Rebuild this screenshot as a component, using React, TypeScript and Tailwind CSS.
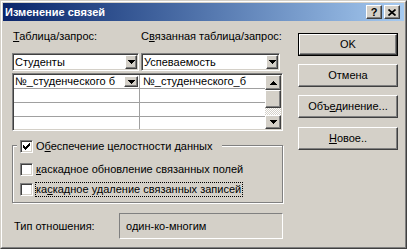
import React from 'react';

// Рамки в стиле классической Windows
const raised =
  'border border-t-white border-l-white border-r-[#404040] border-b-[#404040] shadow-[inset_-1px_-1px_0_#808080] bg-[#d4d0c8]';
const sunken =
  'border border-t-[#808080] border-l-[#808080] border-r-white border-b-white shadow-[inset_1px_1px_0_#404040,inset_-1px_-1px_0_#d4d0c8] p-px';

// Маленькие стрелки, рисуются по пикселям
const ArrowDown = () => (
  <svg width="7" height="4" viewBox="0 0 7 4" shapeRendering="crispEdges">
    <rect x="0" y="0" width="7" height="1" fill="#000" />
    <rect x="1" y="1" width="5" height="1" fill="#000" />
    <rect x="2" y="2" width="3" height="1" fill="#000" />
    <rect x="3" y="3" width="1" height="1" fill="#000" />
  </svg>
);

const ArrowUp = () => (
  <svg width="7" height="4" viewBox="0 0 7 4" shapeRendering="crispEdges">
    <rect x="3" y="0" width="1" height="1" fill="#000" />
    <rect x="2" y="1" width="3" height="1" fill="#000" />
    <rect x="1" y="2" width="5" height="1" fill="#000" />
    <rect x="0" y="3" width="7" height="1" fill="#000" />
  </svg>
);

// Флажок 13x13
const CheckBox = ({ checked }: { checked?: boolean }) => (
  <div className={`w-[13px] h-[13px] shrink-0 bg-white flex items-center justify-center ${sunken}`}>
    {checked && (
      <svg width="7" height="7" viewBox="0 0 7 7" shapeRendering="crispEdges">
        {[2, 3, 4, 3, 2, 1, 0].map((y, x) => (
          <rect key={x} x={x} y={y} width="1" height="3" fill="#000" />
        ))}
      </svg>
    )}
  </div>
);

// Кнопка справа
const Button = ({ children, className = '' }: { children: React.ReactNode; className?: string }) => (
  <div className={`h-[23px] flex items-center justify-center ${raised} ${className}`}>{children}</div>
);

// Выпадающий список
const Combo = ({ text, width }: { text: string; width: string }) => (
  <div className={`h-[18px] bg-white flex ${sunken} ${width}`}>
    <div className="flex-1 pl-px flex items-center overflow-hidden whitespace-nowrap">{text}</div>
    <div className={`w-[12px] flex items-center justify-center ${raised}`}>
      <ArrowDown />
    </div>
  </div>
);

const U = ({ children }: { children: React.ReactNode }) => <span className="underline underline-offset-1">{children}</span>;

export default function App() {
  return (
    <div className="w-[407px] h-[249px] bg-[#d4d0c8] border border-t-[#d4d0c8] border-l-[#d4d0c8] border-r-[#404040] border-b-[#404040] font-['Liberation_Sans',Arial,sans-serif] text-[11px] leading-[13px] text-black">
      <div className="h-full flex flex-col border border-t-white border-l-white border-r-[#808080] border-b-[#808080] p-px">
        {/* Заголовок окна */}
        <div className="h-[18px] shrink-0 flex items-center bg-linear-to-r from-[#0a246a] to-[#a6caf0] pl-[2px] pr-[4px]">
          <span className="flex-1 text-white font-bold">Изменение связей</span>
          <div className={`w-[16px] h-[14px] flex items-center justify-center font-bold text-[11px] leading-none ${raised}`}>?</div>
          <div className={`ml-[2px] w-[16px] h-[14px] flex items-center justify-center ${raised}`}>
            <svg width="8" height="7" viewBox="0 0 8 7">
              <path d="M0.5 0.5L7.5 6.5M7.5 0.5L0.5 6.5" stroke="#000" strokeWidth="1.7" />
            </svg>
          </div>
        </div>

        <div className="flex flex-1 items-start pl-[9px] pt-[9px]">
          {/* Левая часть */}
          <div className="w-[271px] flex flex-col">
            <div className="flex h-[13px]">
              <div className="w-[129px] pl-px">
                <U>Т</U>аблица/запрос:
              </div>
              <div>
                С<U>в</U>язанная таблица/запрос:
              </div>
            </div>

            <div className="mt-[10px] flex gap-[2px]">
              <Combo text="Студенты" width="w-[127px]" />
              <Combo text="Успеваемость" width="w-[139px]" />
            </div>

            {/* Таблица полей */}
            <div className={`mt-[2px] h-[58px] bg-white flex ${sunken}`}>
              <div className="flex-1 flex flex-col">
                <div className="h-[14px] flex border-b border-[#a0a0a0]">
                  <div className="w-[126px] border-r border-[#a0a0a0] flex items-center">
                    <div className="flex-1 pl-px overflow-hidden whitespace-nowrap">№_студенческого б</div>
                    <div className={`w-[14px] h-[11px] mr-[1px] flex items-center justify-center ${raised}`}>
                      <ArrowDown />
                    </div>
                  </div>
                  <div className="flex-1 pl-[3px] overflow-hidden whitespace-nowrap">№_студенческого_б</div>
                </div>
                <div className="h-[14px] flex border-b border-[#a0a0a0]">
                  <div className="w-[126px] border-r border-[#a0a0a0]" />
                </div>
                <div className="h-[14px] flex border-b border-[#a0a0a0]">
                  <div className="w-[126px] border-r border-[#a0a0a0]" />
                </div>
                <div className="flex-1 flex">
                  <div className="w-[126px] border-r border-[#a0a0a0]" />
                </div>
              </div>
              {/* Полоса прокрутки */}
              <div className="w-[16px] flex flex-col">
                <div className={`h-[15px] flex items-center justify-center ${raised}`}>
                  <ArrowUp />
                </div>
                <div className={`h-[18px] ${raised}`} />
                <div className="flex-1 bg-[image:repeating-conic-gradient(#fff_0_25%,#d4d0c8_0_50%)] bg-[length:2px_2px]" />
                <div className={`h-[14px] flex items-center justify-center ${raised}`}>
                  <ArrowDown />
                </div>
              </div>
            </div>

            {/* Группа целостности данных */}
            <div className="mt-[14px] h-[58px] flex flex-col border border-[#808080] shadow-[inset_1px_1px_0_#fff,1px_1px_0_#fff]">
              <div className="-mt-[6px] ml-[4px] self-start h-[13px] flex items-center gap-[3px] bg-[#d4d0c8] pl-[3px] pr-[10px]">
                <CheckBox checked />
                <span>
                  О<U>б</U>еспечение целостности данных
                </span>
              </div>
              <div className="mt-[10px] ml-[7px] flex items-center gap-[3px]">
                <CheckBox />
                <span>
                  <U>к</U>аскадное обновление связанных полей
                </span>
              </div>
              <div className="mt-[6px] ml-[7px] flex items-center gap-[2px]">
                <CheckBox />
                <span className="h-[15px] flex items-center border border-dotted border-black pr-px">
                  ка<U>с</U>кадное удаление связанных записей
                </span>
              </div>
            </div>

            {/* Тип отношения */}
            <div className="mt-[10px] flex items-center">
              <div className="w-[107px] pl-[2px]">Тип отношения:</div>
              <div className="w-[164px] h-[26px] flex items-center pl-[6px] border border-t-[#808080] border-l-[#808080] border-r-white border-b-white">
                один-ко-многим
              </div>
            </div>
          </div>

          {/* Кнопки справа */}
          <div className="ml-[15px] w-[100px] pt-[3px] flex flex-col">
            <div className="h-[23px] border border-black">
              <div className="h-full flex items-center justify-center border border-t-white border-l-white border-r-[#404040] border-b-[#404040] shadow-[inset_-1px_-1px_0_#808080]">
                OK
              </div>
            </div>
            <Button className="mt-[8px]">Отмена</Button>
            <Button className="mt-[8px]">
              <span>
                Объ<U>е</U>динение...
              </span>
            </Button>
            <Button className="mt-[9px]">
              <span>
                <U>Н</U>овое..
              </span>
            </Button>
          </div>
        </div>
      </div>
    </div>
  );
}
